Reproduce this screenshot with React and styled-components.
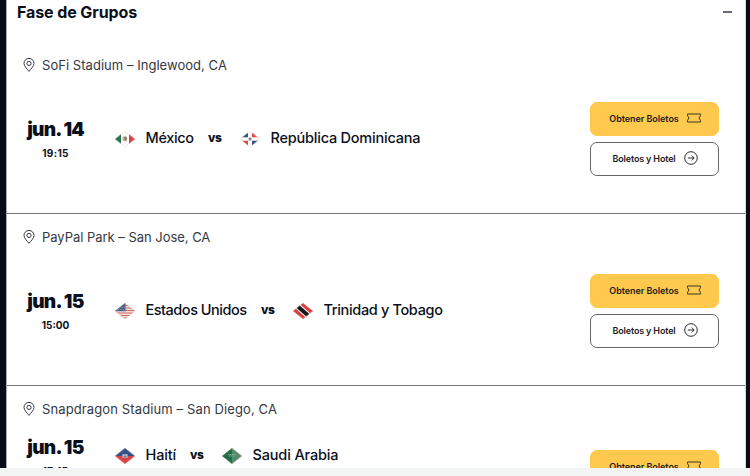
import React from 'react';
import styled, { createGlobalStyle } from 'styled-components';

const Global = createGlobalStyle`
  * { box-sizing: border-box; }
  body { margin: 0; overflow: hidden; background: #f2f4f4; color: #0b0f1c; font-family: "Inter", "Open Sans", sans-serif; }
  svg { display: block; flex: none; }
`;
const Page = styled.div`
  width: 750px; height: 476px; padding-bottom: 8px; background: #f2f4f4;
`;
const Frame = styled.div`
  height: 468px; padding: 0 4px 0 6px; background: #080c18; overflow: hidden;
`;
const Panel = styled.main`
  height: 468px; background: #fff; border-left: 1px solid #a9abb0; border-right: 1px solid #d5d7da; overflow: hidden;
`;
const Header = styled.header`
  height: 42px; padding: 2px 13px 0 10px; display: flex; align-items: flex-start; justify-content: space-between;
`;
const Title = styled.h2`
  margin: 0; font-size: 16px; line-height: 20px; font-weight: 700; letter-spacing: -0.1px; white-space: nowrap;
`;
const Minus = styled.span`
  width: 9px; height: 2px; margin-top: 9px; background: #666a74;
`;
const Match = styled.section`
  height: 172px; padding: 13px 26px 0 16px; border-bottom: 1px solid #74767b;
`;
const Venue = styled.div`
  display: flex; align-items: center; gap: 7px; height: 20px; font-size: 13px; white-space: nowrap; color: #343843;
  letter-spacing: ${p => p.$ls}px;
`;
const Body = styled.div`
  display: flex; align-items: flex-start; margin-top: ${p => p.$top}px;
`;
const When = styled.div`
  width: 65px; margin-top: ${p => p.$top}px; text-align: center; white-space: nowrap;
`;
const Day = styled.div`
  font-size: 19px; line-height: 24px; font-weight: 900; letter-spacing: ${p => p.$ls}px;
`;
const Time = styled.div`
  margin-top: 4px; font-size: 10px; line-height: 14px; font-weight: 700; letter-spacing: ${p => p.$ls}px;
`;
const Teams = styled.div`
  display: flex; align-items: center; height: 24px; margin: ${p => p.$top}px 0 0 26.5px; flex: 1;
`;
const FlagImage = styled.svg`
  margin-top: 2px;
`;
const Name = styled.span`
  width: ${p => p.$w}px; margin-left: 11px; font-size: 14.5px; font-weight: 500; white-space: nowrap; letter-spacing: ${p => p.$ls}px;
`;
const Versus = styled.span`
  width: 14px; margin: 0 17.5px 0 14px; font-size: 12px; font-weight: 800; letter-spacing: -0.3px;
`;
const Actions = styled.div`
  display: flex; flex-direction: column; gap: 6px; width: 129px; margin-top: ${p => p.$top}px;
`;
const Button = styled.button`
  display: flex; align-items: center; justify-content: center; gap: 8px;
  height: 34px; padding: 0 0 2px 1px; border-radius: 7px; font: 600 9px "Inter", sans-serif; white-space: nowrap;
  color: #1b1b1c; border: 1px solid ${p => p.$outline ? '#64666c' : '#ffc94d'};
  background: ${p => p.$outline ? '#fff' : '#ffc94d'}; letter-spacing: ${p => p.$outline ? -0.16 : -0.05}px;
`;

const Pin = () => (
  <svg width="12" height="14" viewBox="0 0 12 14" fill="none" stroke="#343843" strokeWidth="1">
    <path d="M6 13.3C4.2 11.2 1 8 1 5.4a5 5 0 0 1 10 0C11 8 7.800 11.200 6 13.300Z" />
    <circle cx="6" cy="5.400" r="2.100" />
  </svg>
);
const Ticket = () => (
  <svg width="14" height="10" viewBox="0 0 14 10" fill="none" stroke="#3d3322" strokeWidth="1">
    <path d="M.5 1H13.500V2.600Q10.500 5 13.500 7.400V9H.5V7.400Q3.500 5 .5 2.600Z" />
  </svg>
);
const ArrowCircle = () => (
  <svg width="14" height="14" viewBox="0 0 14 14" fill="none" stroke="#252932" strokeWidth="1">
    <circle cx="7" cy="7" r="6.300" /><path d="M3.800 7H10M7.700 4.500 10.200 7 7.700 9.500" />
  </svg>
);

const art = {
  mx: <><path fill="#fff" d="M0 0h20v16H0z" /><path fill="#28734f" d="M0 0h6v16H0z" /><path fill="#dc4148" d="M14 0h6v16h-6z" /><path fill="#b9aa94" d="M7.500 6.600Q9 4.500 12 5.700L12.300 9.800 10 10.500 7.700 9.200Z" /><path d="M9.200 6.500 11.600 7.400 10 9" stroke="#6d6256" fill="none" /></>,
  do: <><path fill="#fff" d="M0 0h20v16H0z" /><path fill="#31528b" d="M0 0h8v6.200H0zM12 9.800h8v6.200h-8z" /><path fill="#db4952" d="M12 0h8v6.200h-8zM0 9.800h8v6.200H0z" /><path fill="#877f7b" d="M8.700 6.500h2.600v3H8.700z" /></>,
  us: <><path fill="#f4dedb" d="M0 0h20v16H0z" /><path stroke="#d36769" strokeWidth="1.200" d="M0 2.500h20M0 5h20M0 7.500h20M0 10h20M0 12.500h20M0 15h20" /><path fill="#4d6389" d="M0 0h10.500v8.300H0z" /><path stroke="#a3afc3" strokeWidth=".7" strokeDasharray="1 1.500" d="M4 4.500h6M3 6.500h7" /></>,
  tt: <><path fill="#dc3d45" d="M0 0h20v16H0z" /><path stroke="#fff" strokeWidth="6" d="m2 1 16 14" /><path stroke="#17191d" strokeWidth="4" d="m2 1 16 14" /></>,
  ht: <><path fill="#31508e" d="M0 0h20v8H0z" /><path fill="#db4248" d="M0 8h20v8H0z" /><path fill="#c9c9cf" d="M7.500 6.300h5v3.700h-5z" /><path stroke="#687585" d="M8 9h4M10 6.500v3" /></>,
  sa: <><path fill="#1d7049" d="M0 0h10v16H0z" /><path fill="#548b70" d="M10 0h10v16H10z" /><path stroke="#a5c2b0" strokeWidth=".8" strokeDasharray="1.200 .6" d="M6 6.500h8M7 8h5" /></>,
};
const Flag = ({ id }) => (
  <FlagImage width="20" height="16" viewBox="0 0 20 16">
    <defs><clipPath id={`diamond-${id}`}><path d="M10 0 20 8 10 16 0 8Z" /></clipPath></defs>
    <g clipPath={`url(#diamond-${id})`}>{art[id]}</g>
    <path d="M10 .4 19.600 8 10 15.600.4 8Z" fill="none" stroke="#d6b878" strokeOpacity=".4" strokeWidth=".7" />
  </FlagImage>
);

const matches = [
  { venue: 'SoFi Stadium – Inglewood, CA', vls: 0.04, day: 'jun. 14', dls: -0.8, time: '19:15', tls: 0.35, a: ['mx', 'México', 48.5, -0.35], b: ['do', 'República Dominicana', 151, -0.22], top: 27, when: 16, teams: 23.5 },
  { venue: 'PayPal Park – San Jose, CA', vls: -0.03, day: 'jun. 15', dls: -0.7, time: '15:00', tls: 0, a: ['us', 'Estados Unidos', 101.5, -0.48], b: ['tt', 'Trinidad y Tobago', 120, -0.34], top: 27, when: 16, teams: 23.5 },
  { venue: 'Snapdragon Stadium – San Diego, CA', vls: 0.12, day: 'jun. 15', dls: -0.7, time: '17:15', tls: 0.35, a: ['ht', 'Haití', 30.5, -0.15], b: ['sa', 'Saudi Arabia', 87, -0.15], top: 16, when: 1, teams: 7.5, actions: 15 },
];

export default function App() {
  return (
    <Page>
      <Global />
      <Frame>
        <Panel>
          <Header><Title>Fase de Grupos</Title><Minus /></Header>
          {matches.map(m => (
            <Match key={m.venue}>
              <Venue $ls={m.vls}><Pin />{m.venue}</Venue>
              <Body $top={m.top}>
                <When $top={m.when}><Day $ls={m.dls}>{m.day}</Day><Time $ls={m.tls}>{m.time}</Time></When>
                <Teams $top={m.teams}>
                  <Flag id={m.a[0]} /><Name $w={m.a[2]} $ls={m.a[3]}>{m.a[1]}</Name>
                  <Versus>vs</Versus>
                  <Flag id={m.b[0]} /><Name $w={m.b[2]} $ls={m.b[3]}>{m.b[1]}</Name>
                </Teams>
                <Actions $top={m.actions || 0}>
                  <Button>Obtener Boletos<Ticket /></Button>
                  <Button $outline>Boletos y Hotel<ArrowCircle /></Button>
                </Actions>
              </Body>
            </Match>
          ))}
        </Panel>
      </Frame>
    </Page>
  );
}
